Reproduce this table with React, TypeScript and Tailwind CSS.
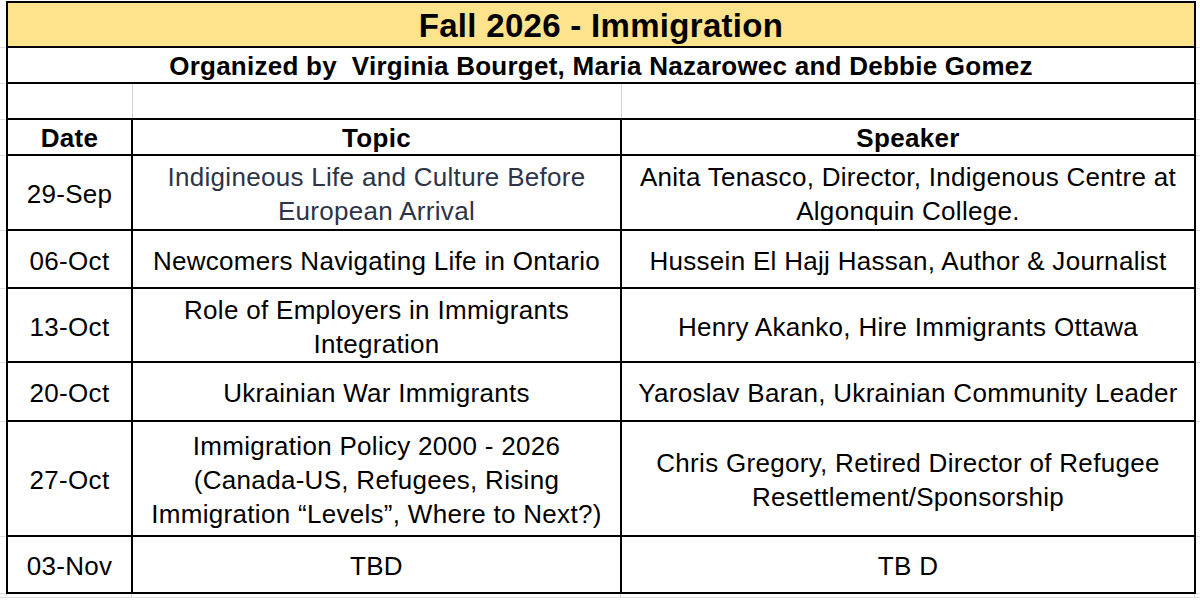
import React from "react";

type Cell = { lines: string[]; color?: string; bold?: boolean };
type RowData = { h: string; cells: [Cell, Cell, Cell] };

const rows: RowData[] = [
  {
    h: "h-[75px]",
    cells: [
      { lines: ["29-Sep"] },
      { lines: ["Indigineous Life and Culture Before", "European Arrival"], color: "text-[#2c3446]" },
      { lines: ["Anita Tenasco, Director, Indigenous Centre at", "Algonquin College."] },
    ],
  },
  {
    h: "h-[58px]",
    cells: [
      { lines: ["06-Oct"] },
      { lines: ["Newcomers Navigating Life in Ontario"] },
      { lines: ["Hussein El Hajj Hassan, Author & Journalist"] },
    ],
  },
  {
    h: "h-[74px]",
    cells: [
      { lines: ["13-Oct"] },
      { lines: ["Role of Employers in Immigrants", "Integration"] },
      { lines: ["Henry Akanko, Hire Immigrants Ottawa"] },
    ],
  },
  {
    h: "h-[59px]",
    cells: [
      { lines: ["20-Oct"] },
      { lines: ["Ukrainian War Immigrants"] },
      { lines: ["Yaroslav Baran, Ukrainian Community Leader"] },
    ],
  },
  {
    h: "h-[115px]",
    cells: [
      { lines: ["27-Oct"] },
      {
        lines: [
          "Immigration Policy 2000 - 2026",
          "(Canada-US, Refugees, Rising",
          "Immigration \u201CLevels\u201D, Where to Next?)",
        ],
      },
      { lines: ["Chris Gregory, Retired Director of Refugee", "Resettlement/Sponsorship"] },
    ],
  },
  {
    h: "h-[57px]",
    cells: [{ lines: ["03-Nov"] }, { lines: ["TBD"] }, { lines: ["TB D"] }],
  },
];

function Gutter({ grow }: { grow?: boolean }) {
  return <div className={(grow ? "flex-1 " : "w-[6px] ") + "border-b border-[#dcdcdc]"} />;
}

function CellText({ cell }: { cell: Cell }) {
  return (
    <div
      className={
        "pt-[3px] text-center whitespace-nowrap leading-[34px] tracking-[0.3px] " +
        (cell.bold ? "font-bold " : "") +
        (cell.color ?? "text-black")
      }
    >
      {cell.lines.map((l, i) => (
        <div key={i}>{l}</div>
      ))}
    </div>
  );
}

export default function App() {
  return (
    <div className="w-[1200px] h-[600px] bg-white pt-px font-['Liberation_Sans',Arial,sans-serif] text-[26px] text-black overflow-hidden">
      {/* Title */}
      <div className="flex h-[47px]">
        <Gutter />
        <div className="w-[1190px] border-2 border-black bg-[#fde38b] flex items-center justify-center pt-[2px] text-[33px] font-bold tracking-[0.3px]">
          Fall 2026 - Immigration
        </div>
        <Gutter grow />
      </div>

      {/* Organizers */}
      <div className="flex h-[36px]">
        <Gutter />
        <div className="w-[1190px] border-x-2 border-b-2 border-black flex items-center justify-center pt-[3px] font-bold tracking-[0.25px] whitespace-pre">
          Organized by  Virginia Bourget, Maria Nazarowec and Debbie Gomez
        </div>
        <Gutter grow />
      </div>

      {/* Empty row */}
      <div className="flex h-[36px]">
        <Gutter />
        <div className="w-[1190px] border-x-2 border-b-2 border-black flex">
          <div className="w-[125px] border-r border-[#d4d4d4]" />
          <div className="w-[489px] border-r border-[#d4d4d4]" />
          <div className="flex-1" />
        </div>
        <Gutter grow />
      </div>

      {/* Header */}
      <div className="flex h-[36px]">
        <Gutter />
        <div className="w-[1190px] border-x-2 border-b-2 border-black flex font-bold tracking-[0.3px]">
          <div className="w-[125px] border-r-2 border-black flex items-center justify-center pt-[3px]">Date</div>
          <div className="w-[489px] border-r-2 border-black flex items-center justify-center pt-[3px]">Topic</div>
          <div className="flex-1 flex items-center justify-center pt-[3px]">Speaker</div>
        </div>
        <Gutter grow />
      </div>

      {rows.map((r, i) => (
        <div key={i} className={"flex " + r.h}>
          <Gutter />
          <div className="w-[1190px] border-x-2 border-b-2 border-black flex">
            <div className="w-[125px] border-r-2 border-black flex items-center justify-center">
              <CellText cell={r.cells[0]} />
            </div>
            <div className="w-[489px] border-r-2 border-black flex items-center justify-center">
              <CellText cell={r.cells[1]} />
            </div>
            <div className="flex-1 flex items-center justify-center">
              <CellText cell={r.cells[2]} />
            </div>
          </div>
          <Gutter grow />
        </div>
      ))}

      {/* Sheet gridlines below the table */}
      <div className="flex h-[4px]">
        <div className="w-[7px] border-r border-b border-[#dcdcdc]" />
        <div className="w-[125px] border-r border-b border-[#dcdcdc]" />
        <div className="w-[489px] border-r border-b border-[#dcdcdc]" />
        <div className="w-[574px] border-r border-b border-[#dcdcdc]" />
        <div className="flex-1 border-b border-[#dcdcdc]" />
      </div>
    </div>
  );
}
